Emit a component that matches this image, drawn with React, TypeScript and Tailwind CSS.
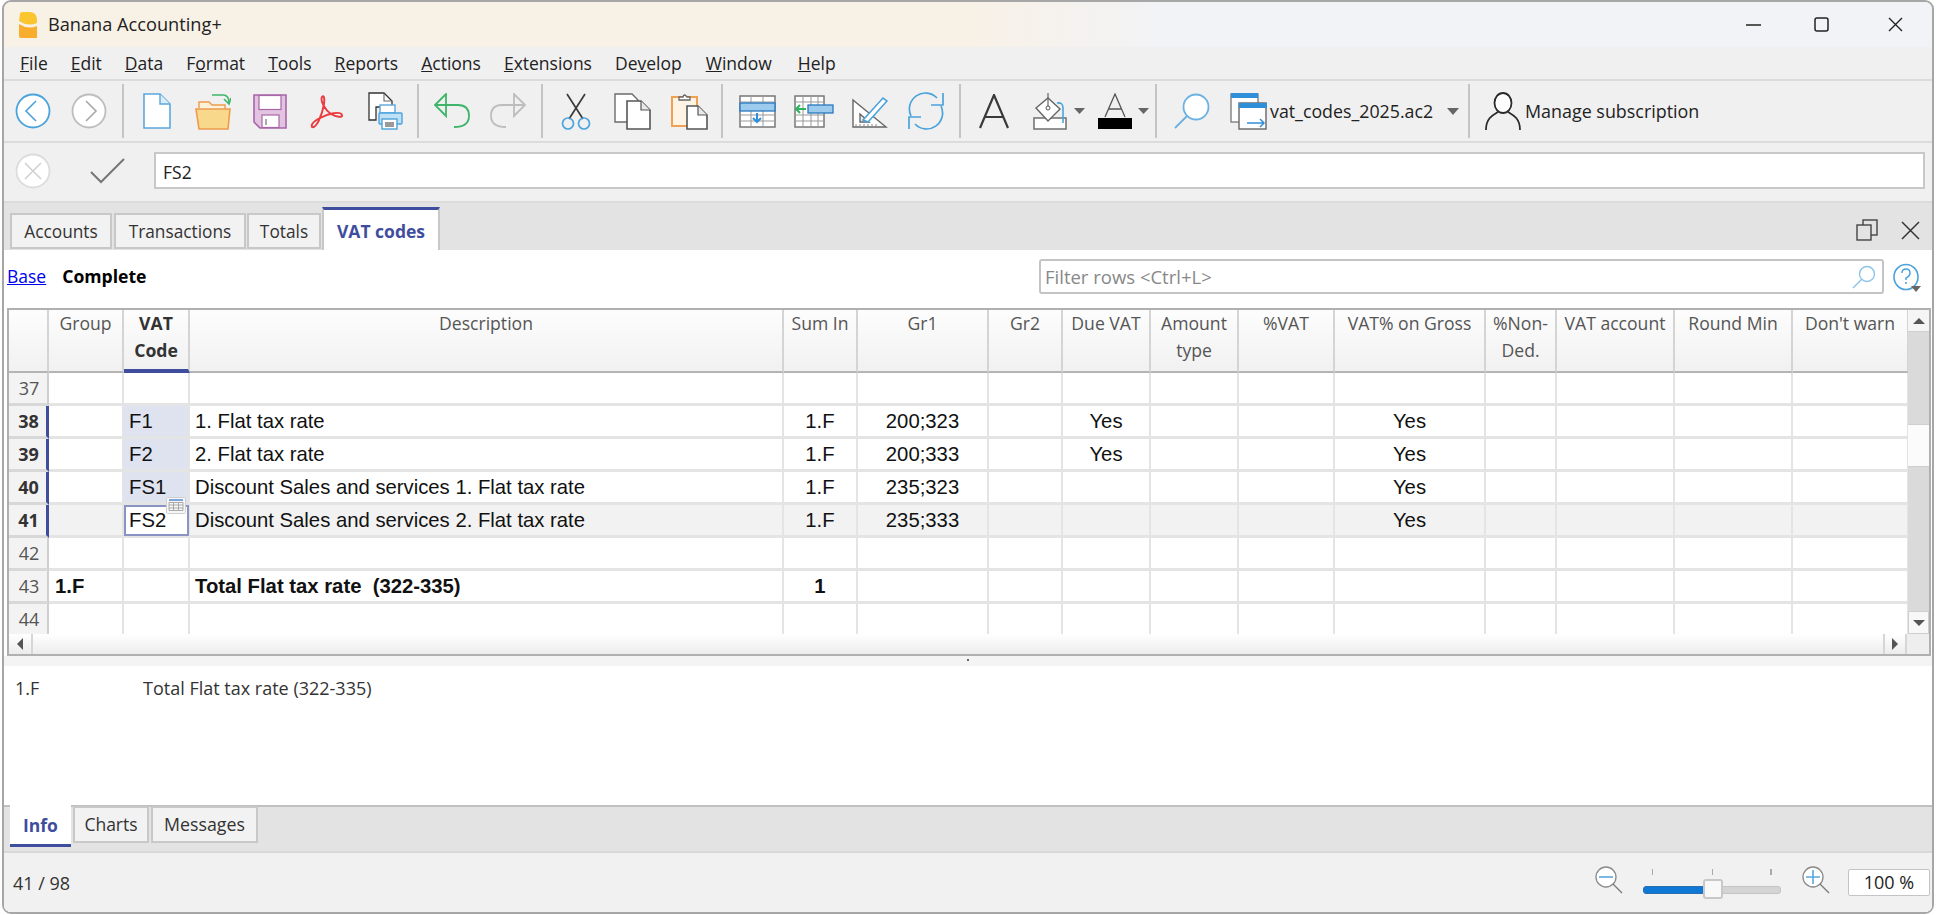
import React from "react";

const UI = "font-['Open_Sans','Noto_Sans',sans-serif]";

function Sep({ ml }: { ml: string }) {
  return <div className={`w-[2px] h-[54px] bg-[#c4c4c4] shrink-0 ${ml}`} />;
}

const Back = () => (
  <svg width="36" height="36" viewBox="0 0 36 36" className="ml-[11px] shrink-0">
    <circle cx="18" cy="18" r="16.5" fill="#fff" stroke="#4aa3dc" strokeWidth="1.8" />
    <path d="M21 8 L11 18 L21 28" fill="none" stroke="#4aa3dc" strokeWidth="1.6" />
  </svg>
);
const Fwd = () => (
  <svg width="36" height="36" viewBox="0 0 36 36" className="ml-[20px] shrink-0">
    <circle cx="18" cy="18" r="16.5" fill="#fff" stroke="#bdbdbd" strokeWidth="1.8" />
    <path d="M15 8 L25 18 L15 28" fill="none" stroke="#a8a8a8" strokeWidth="1.6" />
  </svg>
);
const NewDoc = () => (
  <svg width="28" height="36" viewBox="0 0 28 36" className="ml-[19px] shrink-0">
    <path d="M1 1h16l10 10v24H1z" fill="#fff" stroke="#5ba7dd" strokeWidth="1.6" />
    <path d="M17 1v10h10" fill="#d9ecf8" stroke="#5ba7dd" strokeWidth="1.4" />
  </svg>
);
const Folder = () => (
  <svg width="36" height="38" viewBox="0 0 36 38" className="ml-[24px] shrink-0">
    <path d="M17 3h11q6 0 6 8" fill="none" stroke="#3fb56a" strokeWidth="1.6" />
    <path d="M29 7l5 5 2-6" fill="none" stroke="#3fb56a" strokeWidth="1.6" />
    <path d="M4 16v-6h10l3 3h13v4" fill="#fdf2d8" stroke="#ee9a4d" strokeWidth="1.4" />
    <path d="M1 17h34l-2 20H4z" fill="#f8d98c" stroke="#ee9a4d" strokeWidth="1.6" />
  </svg>
);
const Save = () => (
  <svg width="34" height="35" viewBox="0 0 34 35" className="ml-[22px] shrink-0">
    <path d="M1 1h32v33H7l-6-6z" fill="#e2c4e0" stroke="#a865a8" strokeWidth="1.6" />
    <rect x="6" y="1.5" width="22" height="14" fill="#fff" stroke="#a865a8" strokeWidth="1.2" />
    <rect x="9" y="21" width="17" height="12.5" fill="#fff" stroke="#a865a8" strokeWidth="1.2" />
    <rect x="12" y="25" width="2" height="6" fill="#aaa" />
  </svg>
);
const Pdf = () => (
  <svg width="34" height="35" viewBox="0 0 34 35" className="ml-[23px] shrink-0">
    <path d="M2 33 C6 35 12 22 14 10 C15 2 13 1 12 3 C10 7 15 16 21 20 C26 23 33 24 32 21 C31 17 18 19 8 25 C3 28 1 31 2 33 Z" fill="none" stroke="#ec3b40" strokeWidth="1.9" />
  </svg>
);
const Print = () => (
  <svg width="35" height="38" viewBox="0 0 35 38" className="ml-[24px] shrink-0">
    <path d="M1 1h15l8 8v6H8v13H1z" fill="#fff" stroke="#333" strokeWidth="1.3" />
    <path d="M16 1v8h8" fill="none" stroke="#666" strokeWidth="1.1" />
    <rect x="12" y="13" width="15" height="8" fill="#fff" stroke="#5ba7dd" strokeWidth="1.4" />
    <rect x="11" y="21" width="23" height="11" rx="1" fill="#bfe0f5" stroke="#4aa3dc" strokeWidth="1.4" />
    <rect x="14" y="27" width="15" height="10" fill="#fff" stroke="#4aa3dc" strokeWidth="1.4" />
    <rect x="17" y="30" width="9" height="5" fill="#9a9a9a" />
  </svg>
);
const Undo = () => (
  <svg width="36" height="36" viewBox="0 0 36 36" className="ml-[15px] shrink-0">
    <path d="M1 12 L12 1 V23 Z" fill="none" stroke="#3fb56a" strokeWidth="1.8" />
    <path d="M1 12 H24 Q35 12 35 23 Q35 34 20 34" fill="none" stroke="#3fb56a" strokeWidth="1.8" />
  </svg>
);
const Redo = () => (
  <svg width="36" height="36" viewBox="0 0 36 36" className="ml-[20px] shrink-0">
    <path d="M35 12 L24 1 V23 Z" fill="none" stroke="#bdbdbd" strokeWidth="1.8" />
    <path d="M35 12 H12 Q1 12 1 23 Q1 34 16 34" fill="none" stroke="#bdbdbd" strokeWidth="1.8" />
  </svg>
);
const Cut = () => (
  <svg width="30" height="37" viewBox="0 0 30 37" className="ml-[18px] shrink-0">
    <path d="M6 1 L22 26 M24 1 L8 26" stroke="#3b3b3b" strokeWidth="1.7" fill="none" />
    <circle cx="7" cy="30.5" r="5.5" fill="none" stroke="#4aa3dc" strokeWidth="1.7" />
    <circle cx="23" cy="30.5" r="5.5" fill="none" stroke="#4aa3dc" strokeWidth="1.7" />
  </svg>
);
const Copy = () => (
  <svg width="37" height="37" viewBox="0 0 37 37" className="ml-[23px] shrink-0">
    <path d="M1 1h17l6 6v22H1z" fill="#fff" stroke="#6b6b6b" strokeWidth="1.4" />
    <path d="M13 8h14l9 9v19H13z" fill="#fff" stroke="#555" strokeWidth="1.6" />
    <path d="M27 8v9h9" fill="#e8e8e8" stroke="#555" strokeWidth="1.2" />
  </svg>
);
const Paste = () => (
  <svg width="37" height="37" viewBox="0 0 37 37" className="ml-[20px] shrink-0">
    <rect x="1" y="4" width="25" height="29" fill="#fdf4e6" stroke="#f0a24f" strokeWidth="2" />
    <path d="M8 7V4h4q1-4 4 0h3v3z" fill="#fff" stroke="#666" strokeWidth="1.3" />
    <path d="M16 13h11l9 9v14H16z" fill="#fff" stroke="#555" strokeWidth="1.6" />
    <path d="M27 13v9h9" fill="#e8e8e8" stroke="#555" strokeWidth="1.2" />
  </svg>
);
const InsRow = () => (
  <svg width="37" height="33" viewBox="0 0 37 33" className="ml-[16px] shrink-0">
    <rect x="1" y="1" width="35" height="31" fill="#fff" stroke="#777" strokeWidth="1.5" />
    <path d="M1 7h35M1 20h35M1 26h35M12 1v31M24 1v31" stroke="#999" strokeWidth="1" />
    <rect x="1" y="8" width="35" height="8" fill="#9ccbee" stroke="#2a78bf" strokeWidth="1.3" />
    <path d="M18 18v9M14 23l4 4 4-4" fill="none" stroke="#2f8fd8" strokeWidth="2" />
  </svg>
);
const InsCol = () => (
  <svg width="40" height="33" viewBox="0 0 40 33" className="ml-[18px] shrink-0">
    <rect x="1" y="1" width="29" height="31" fill="#fff" stroke="#777" strokeWidth="1.5" />
    <path d="M1 7h29M1 20h29M1 26h29M9 1v31M17 1v31M24 1v31" stroke="#999" strokeWidth="1" />
    <rect x="14" y="10" width="25" height="8" fill="#9ccbee" stroke="#2a78bf" strokeWidth="1.3" />
    <path d="M12 14H2M6 10l-4 4 4 4" fill="none" stroke="#2fb35f" strokeWidth="2" />
  </svg>
);
const Tool = () => (
  <svg width="36" height="36" viewBox="0 0 36 36" className="ml-[18px] shrink-0">
    <path d="M1 7 L34 34 H1 Z M8 21 L17 29 H8 Z" fill="#fff" fillRule="evenodd" stroke="#666" strokeWidth="1.4" />
    <path d="M4 34v-3M8 34v-3M12 34v-3M16 34v-3M20 34v-3M24 34v-3" stroke="#888" strokeWidth="1" />
    <path d="M11 27 L31 5 L35 8 L16 29 Z" fill="#fff" stroke="#4aa3dc" strokeWidth="1.6" />
  </svg>
);
const Refresh = () => (
  <svg width="36" height="38" viewBox="0 0 36 38" className="ml-[20px] shrink-0">
    <path d="M3 24 A16 16 0 0 1 29 6" fill="none" stroke="#4aa3dc" strokeWidth="1.7" />
    <path d="M33 14 A16 16 0 0 1 7 32" fill="none" stroke="#4aa3dc" strokeWidth="1.7" />
    <path d="M35 1v12H23M1 37V25h12" fill="none" stroke="#4aa3dc" strokeWidth="1.7" />
  </svg>
);
const BigA = () => (
  <svg width="30" height="35" viewBox="0 0 30 35" className="ml-[18px] shrink-0">
    <path d="M1 34 L15 1 L29 34 M6 23H24" fill="none" stroke="#3a3a3a" strokeWidth="2.2" />
  </svg>
);
const Fill = () => (
  <svg width="54" height="37" viewBox="0 0 54 37" className="ml-[24px] shrink-0">
    <rect x="1" y="25" width="32" height="11" fill="#fff" stroke="#777" strokeWidth="1.6" />
    <path d="M3 15 L15 5 L27 16 L15 28 Z" fill="#fff" stroke="#666" strokeWidth="1.4" />
    <path d="M15 0v14" stroke="#666" strokeWidth="1.2" />
    <circle cx="15" cy="15" r="2" fill="#fff" stroke="#555" />
    <path d="M24 10 Q30 9 30 15V30" fill="none" stroke="#4aa3dc" strokeWidth="1.6" />
    <path d="M41 15h11l-5.500 6z" fill="#666" />
  </svg>
);
const FontColor = () => (
  <svg width="52" height="37" viewBox="0 0 52 37" className="ml-[11px] shrink-0">
    <path d="M7 24 L17 1 L27 24 M11 16H23" fill="none" stroke="#555" strokeWidth="1.3" />
    <rect x="0" y="25" width="34" height="11" fill="#000" />
    <path d="M40 15h11l-5.500 6z" fill="#666" />
  </svg>
);
const Search = () => (
  <svg width="36" height="36" viewBox="0 0 36 36" className="ml-[17px] shrink-0">
    <circle cx="22" cy="14" r="12.500" fill="#fff" stroke="#6ab2e2" strokeWidth="1.8" />
    <path d="M13 23 L1 35" stroke="#6ab2e2" strokeWidth="1.8" />
  </svg>
);
const Docs = () => (
  <svg width="37" height="37" viewBox="0 0 37 37" className="ml-[20px] shrink-0">
    <rect x="1" y="1" width="27" height="28" fill="#fff" stroke="#777" strokeWidth="1.3" />
    <rect x="1" y="0" width="27" height="5" fill="#2f8fd8" />
    <rect x="9" y="10" width="27" height="26" fill="#fff" stroke="#666" strokeWidth="1.4" />
    <rect x="9" y="10" width="28" height="5" fill="#2f8fd8" />
    <path d="M17 30h17M30 26l4 4-4 4" fill="none" stroke="#2f8fd8" strokeWidth="1.5" />
  </svg>
);
const Person = () => (
  <svg width="36" height="38" viewBox="0 0 36 38" className="ml-[15px] shrink-0">
    <ellipse cx="18" cy="11" rx="8.500" ry="10" fill="#fff" stroke="#2b2b2b" strokeWidth="1.8" />
    <path d="M1 38 C1 26 8 23 13 20 M35 38 C35 26 28 23 23 20" fill="none" stroke="#2b2b2b" strokeWidth="1.8" />
  </svg>
);

function Tab({ label, cls }: { label: string; cls: string }) {
  return (
    <div className={`h-[36px] mt-[10px] bg-[#f2f2f2] border-2 border-[#c8c8c8] flex items-center justify-center pt-[2px] text-[17.3px] text-[#333] shrink-0 ${cls}`}>
      {label}
    </div>
  );
}

const GRID = "grid grid-cols-[40px_75px_66px_594px_74px_131px_74px_88px_88px_96px_151px_71px_118px_118px_116px]";

const heads: [string, string?][] = [
  [""],
  ["Group"],
  ["VAT Code", "sel"],
  ["Description"],
  ["Sum In"],
  ["Gr1"],
  ["Gr2"],
  ["Due VAT"],
  ["Amount type"],
  ["%VAT"],
  ["VAT% on Gross"],
  ["%Non-Ded."],
  ["VAT account"],
  ["Round Min"],
  ["Don't warn"],
];

type Row = { n: number; sel?: boolean; cur?: boolean; bold?: boolean; group?: string; code?: string; desc?: string; sum?: string; gr1?: string; due?: string; gross?: string };
const rows: Row[] = [
  { n: 37 },
  { n: 38, sel: true, code: "F1", desc: "1. Flat tax rate", sum: "1.F", gr1: "200;323", due: "Yes", gross: "Yes" },
  { n: 39, sel: true, code: "F2", desc: "2. Flat tax rate", sum: "1.F", gr1: "200;333", due: "Yes", gross: "Yes" },
  { n: 40, sel: true, code: "FS1", desc: "Discount Sales and services 1. Flat tax rate", sum: "1.F", gr1: "235;323", gross: "Yes" },
  { n: 41, sel: true, cur: true, code: "FS2", desc: "Discount Sales and services 2. Flat tax rate", sum: "1.F", gr1: "235;333", gross: "Yes" },
  { n: 42 },
  { n: 43, bold: true, group: "1.F", desc: "Total Flat tax rate  (322-335)", sum: "1" },
  { n: 44 },
];

const cellBase = "h-[33px] border-r-2 border-b-[3px] border-[#e4e4e4] flex items-center whitespace-pre";

function DataRow({ r }: { r: Row }) {
  const bg = r.cur ? "bg-[#f2f2f2]" : "bg-white";
  const w = r.bold ? "font-bold" : "";
  const c = `${cellBase} overflow-hidden ${bg} ${w}`;
  const codeBg = r.sel && !r.cur ? "bg-[#dfe2ef]" : bg;
  return (
    <div className={`${GRID} font-['Liberation_Sans',Arial,sans-serif] text-[20.3px] text-[#111]`}>
      <div className={`h-[33px] border-b-[3px] border-[#d8d8d8] bg-[#f3f3f3] flex items-center justify-center pl-[2px] ${UI} text-[18px] ${r.sel ? "border-r-[3px] border-r-[#3f4d9e] font-bold text-[#333]" : "border-r-2 border-r-[#cfcfcf] text-[#555]"}`}>
        {r.n}
      </div>
      <div className={`${c} pl-[6px]`}>{r.group}</div>
      <div className={`${cellBase} ${w} pl-[5px] relative ${codeBg}`}>
        {r.cur ? (
          <>
            <div className="absolute left-0 top-0 w-[65px] h-[31px] border-2 border-[#8a94c4] bg-white pl-[3px] flex items-center">{r.code}</div>
            <svg width="20" height="17" viewBox="0 0 20 17" className="absolute left-[42px] top-[-8px] z-10">
              <rect x="0.500" y="0.500" width="19" height="16" rx="1" fill="#f6f6f6" stroke="#cfcfcf" />
              <rect x="3" y="2" width="14" height="2" fill="#7da7dc" />
              <path d="M3 5.500h14v8H3zM3 8h14M3 11h14M7.500 5.500v8M12.500 5.500v8" fill="none" stroke="#9a9a9a" strokeWidth="0.8" />
            </svg>
          </>
        ) : (
          r.code
        )}
      </div>
      <div className={`${c} pl-[5px]`}>{r.desc}</div>
      <div className={`${c} justify-center`}>{r.sum}</div>
      <div className={`${c} justify-center`}>{r.gr1}</div>
      <div className={c} />
      <div className={`${c} justify-center`}>{r.due}</div>
      <div className={c} />
      <div className={c} />
      <div className={`${c} justify-center`}>{r.gross}</div>
      <div className={c} />
      <div className={c} />
      <div className={c} />
      <div className={c} />
    </div>
  );
}

export default function App() {
  return (
    <div className={`w-[1936px] h-[915px] bg-white overflow-hidden ${UI} text-[#222]`}>
      <div className="ml-[2px] w-[1932px] h-[914px] border-2 border-[#a6a6a6] rounded-[9px] overflow-hidden flex flex-col bg-[#f0f0f0]">
        {/* Title */}
        <div className="h-[45px] shrink-0 flex items-center bg-gradient-to-r from-[#f8f1e6] from-50% to-[#f2f3f6] to-60%">
          <svg width="20" height="28" viewBox="0 0 20 28" className="ml-[14px] shrink-0">
            <path d="M2 3 Q2 1 5 1 H12 Q18 1 19 8 V12 Q10 16 1 10 Z" fill="#fbc52f" />
            <path d="M1 13 Q10 19 19 15 V27 H3 Q1 27 1 25 Z" fill="#f8ae2c" />
          </svg>
          <span className="ml-[10px] text-[18.2px] text-[#222]">Banana Accounting+</span>
          <svg width="15" height="2" viewBox="0 0 15 2" className="ml-auto shrink-0"><path d="M0 1h15" stroke="#222" strokeWidth="1.5" /></svg>
          <svg width="15" height="15" viewBox="0 0 15 15" className="ml-[53px] shrink-0"><rect x="1" y="1" width="13" height="13" rx="2" fill="none" stroke="#222" strokeWidth="1.5" /></svg>
          <svg width="15" height="15" viewBox="0 0 15 15" className="ml-[59px] mr-[29px] shrink-0"><path d="M1 1l13 13M14 1L1 14" stroke="#222" strokeWidth="1.4" /></svg>
        </div>
        {/* Menu */}
        <div className="h-[34px] shrink-0 border-b-2 border-[#dcdcdc] flex items-center pt-[1px] text-[17.5px] text-[#222]">
          <span className="ml-[16px]"><u>F</u>ile</span>
          <span className="ml-[23px]"><u>E</u>dit</span>
          <span className="ml-[23px]"><u>D</u>ata</span>
          <span className="ml-[23px]">F<u>o</u>rmat</span>
          <span className="ml-[23px]"><u>T</u>ools</span>
          <span className="ml-[23px]"><u>R</u>eports</span>
          <span className="ml-[23px]"><u>A</u>ctions</span>
          <span className="ml-[23px]"><u>E</u>xtensions</span>
          <span className="ml-[23px]">De<u>v</u>elop</span>
          <span className="ml-[24px]"><u>W</u>indow</span>
          <span className="ml-[26px]"><u>H</u>elp</span>
        </div>
        {/* Toolbar */}
        <div className="h-[62px] shrink-0 border-b-2 border-[#dcdcdc] flex items-center">
          <Back />
          <Fwd />
          <Sep ml="ml-[15px]" />
          <NewDoc />
          <Folder />
          <Save />
          <Pdf />
          <Print />
          <Sep ml="ml-[14px]" />
          <Undo />
          <Redo />
          <Sep ml="ml-[15px]" />
          <Cut />
          <Copy />
          <Paste />
          <Sep ml="ml-[13px]" />
          <InsRow />
          <InsCol />
          <Tool />
          <Refresh />
          <Sep ml="ml-[15px]" />
          <BigA />
          <Fill />
          <FontColor />
          <Sep ml="ml-[5px]" />
          <Search />
          <Docs />
          <span className="ml-[3px] w-[163px] shrink-0 whitespace-nowrap text-[17.8px] text-[#222]">vat_codes_2025.ac2</span>
          <span className="shrink-0 ml-[14px] w-0 h-0 border-x-[6px] border-x-transparent border-t-[7px] border-t-[#666]" />
          <Sep ml="ml-[9px]" />
          <Person />
          <span className="ml-[4px] text-[17.9px] text-[#222] whitespace-nowrap">Manage subscription</span>
        </div>
        {/* Formula bar */}
        <div className="h-[60px] shrink-0 border-b-2 border-[#dcdcdc] flex items-center pb-[3px]">
          <svg width="36" height="36" viewBox="0 0 36 36" className="ml-[11px] shrink-0">
            <circle cx="18" cy="18" r="16.500" fill="#fff" stroke="#dcdcdc" strokeWidth="1.8" />
            <path d="M10 10l16 16M26 10L10 26" stroke="#d0d0d0" strokeWidth="1.6" />
          </svg>
          <svg width="35" height="26" viewBox="0 0 35 26" className="ml-[39px] shrink-0">
            <path d="M1 14 L11 24 L34 1" fill="none" stroke="#777" strokeWidth="2" />
          </svg>
          <div className="ml-[29px] w-[1771px] h-[37px] bg-white border-2 border-[#c8c8c8] flex items-center pl-[7px] pt-[3px] text-[17.5px] text-[#222]">FS2</div>
        </div>
        {/* Tabs */}
        <div className="h-[47px] shrink-0 bg-[#e3e3e3] flex items-start">
          <Tab label="Accounts" cls="ml-[6px] w-[102px]" />
          <Tab label="Transactions" cls="ml-[2px] w-[132px]" />
          <Tab label="Totals" cls="ml-[1px] w-[74px]" />
          <div className="ml-[1px] mt-[4px] w-[118px] h-[43px] bg-white border-t-[3px] border-[#3f4d9e] border-x-2 border-x-[#c8c8c8] flex items-center justify-center pt-[2px] text-[17.5px] font-bold text-[#3f4d9e] shrink-0">
            VAT codes
          </div>
          <svg width="24" height="22" viewBox="0 0 24 22" className="ml-auto mt-[16px] shrink-0">
            <rect x="8" y="1" width="14" height="15" fill="none" stroke="#444" strokeWidth="1.4" />
            <rect x="2" y="6" width="14" height="15" fill="#e3e3e3" stroke="#444" strokeWidth="1.4" />
          </svg>
          <svg width="19" height="19" viewBox="0 0 19 19" className="ml-[22px] mr-[12px] mt-[18px] shrink-0">
            <path d="M1 1l17 17M18 1L1 18" stroke="#333" strokeWidth="1.5" />
          </svg>
        </div>
        {/* White content */}
        <div className="flex-1 bg-white flex flex-col min-h-0">
          <div className="h-[58px] shrink-0 flex items-center pb-[5px]">
            <a className="ml-[3px] text-[17.5px] text-[#0000ee] underline">Base</a>
            <span className="ml-[16px] text-[17.6px] font-bold text-black">Complete</span>
            <div className="ml-auto w-[845px] h-[35px] border-2 border-[#c4c4c4] rounded-[3px] flex items-center pl-[4px] text-[18.5px] text-[#888]">
              Filter rows &lt;Ctrl+L&gt;
              <svg width="24" height="24" viewBox="0 0 24 24" className="ml-auto mr-[6px]">
                <circle cx="15" cy="9" r="7.500" fill="none" stroke="#8cc4e8" strokeWidth="1.4" />
                <path d="M9.500 14.500 L1 23" stroke="#8cc4e8" strokeWidth="1.4" />
              </svg>
            </div>
            <div className="relative ml-[9px] mr-[11px] w-[28px] h-[30px] shrink-0">
              <svg width="28" height="30" viewBox="0 0 28 30">
                <ellipse cx="13" cy="15" rx="12" ry="12.500" fill="#fff" stroke="#4aa3dc" strokeWidth="1.6" />
                <path d="M9 11 Q9 7 13 7 Q17 7 17 11 Q17 14 13 16 V18" fill="none" stroke="#4aa3dc" strokeWidth="1.5" />
                <circle cx="13" cy="21" r="1" fill="#4aa3dc" />
              </svg>
              <span className="absolute right-0 bottom-[0px] w-0 h-0 border-x-[5px] border-x-transparent border-t-[6px] border-t-[#666]" />
            </div>
          </div>
          {/* Table */}
          <div className="ml-[3px] mr-[1px] h-[348px] shrink-0 border-2 border-[#b0b0b0] flex flex-col overflow-hidden relative">
            <div className="flex flex-1 min-h-0">
              <div className="flex-1 min-w-0 overflow-hidden">
                <div className={`${GRID} h-[63px]`}>
                  {heads.map(([h, s], i) => (
                    <div
                      key={i}
                      className={`h-[63px] border-r-2 border-r-[#d4d4d4] bg-gradient-to-b from-[#fdfdfd] to-[#f1f1f1] text-center text-[17.6px] leading-[27px] whitespace-normal ${s ? "border-b-[4px] font-bold text-[#333] border-b-[#3f4d9e]" : "border-b-2 border-b-[#b4b4b4] text-[#555]"}`}
                    >
                      {h === "VAT Code" ? <>VAT<br />Code</> : h === "%Non-Ded." ? <>%Non-<br />Ded.</> : h === "Amount type" ? <>Amount<br />type</> : <span className="whitespace-nowrap">{h}</span>}
                    </div>
                  ))}
                </div>
                {rows.map((r) => (
                  <DataRow key={r.n} r={r} />
                ))}
              </div>
              <div className="w-[21px] shrink-0 flex flex-col bg-[#dadada]">
                <div className="h-[22px] bg-[#f5f5f5] border-b border-[#cfcfcf] flex items-center justify-center">
                  <span className="w-0 h-0 border-x-[6px] border-x-transparent border-b-[6px] border-b-[#555]" />
                </div>
                <div className="h-[92px]" />
                <div className="h-[43px] bg-[#fbfbfb] border-y border-[#cfcfcf]" />
                <div className="flex-1" />
                <div className="h-[23px] bg-[#f8f8f8] border border-[#cfcfcf] flex items-center justify-center">
                  <span className="w-0 h-0 border-x-[6px] border-x-transparent border-t-[6px] border-t-[#555]" />
                </div>
              </div>
            </div>
            <div className="h-[20px] shrink-0 flex bg-gradient-to-b from-[#ffffff] to-[#ececec]">
              <div className="w-[24px] border-r-2 border-[#d6d6d6] flex items-center justify-center">
                <span className="w-0 h-0 border-y-[6px] border-y-transparent border-r-[6px] border-r-[#555]" />
              </div>
              <div className="flex-1" />
              <div className="w-[24px] border-x-2 border-[#d6d6d6] flex items-center justify-center">
                <span className="w-0 h-0 border-y-[6px] border-y-transparent border-l-[6px] border-l-[#555]" />
              </div>
              <div className="w-[22px] bg-[#eeeeee]" />
            </div>
          </div>
          {/* Splitter */}
          <div className="h-[10px] shrink-0 bg-[#f4f4f4] flex justify-center">
            <span className="w-[2px] h-[2px] bg-[#666] mt-[3px]" />
          </div>
          {/* Info panel */}
          <div className="h-[139px] shrink-0 bg-white flex items-start pt-[9px] pl-[11px] text-[18px] text-[#333]">
            <span className="w-[128px]">1.F</span>
            <span>Total Flat tax rate (322-335)</span>
          </div>
          {/* Bottom tabs */}
          <div className="h-[48px] shrink-0 bg-[#e3e3e3] border-t-2 border-b-2 border-t-[#c0c0c0] border-b-[#d8d8d8] flex items-start">
            <div className="ml-[6px] -mt-[2px] w-[61px] h-[42px] bg-white border-b-[3px] border-[#3f4d9e] flex items-center justify-center pt-[2px] font-bold text-[17.5px] text-[#3f4d9e] shrink-0">Info</div>
            <div className="ml-[2px] w-[76px] h-[37px] -mt-[1px] bg-[#f2f2f2] border-2 border-[#c8c8c8] flex items-center justify-center text-[17.5px] text-[#333] shrink-0">Charts</div>
            <div className="ml-[2px] w-[107px] h-[37px] -mt-[1px] bg-[#f2f2f2] border-2 border-[#c8c8c8] flex items-center justify-center text-[17.8px] text-[#333] shrink-0">Messages</div>
          </div>
          {/* Status */}
          <div className="flex-1 bg-[#f1f1f1] flex items-center text-[18px] text-[#333]">
            <span className="ml-[9px] pt-[2px]">41 / 98</span>
            <svg width="28" height="28" viewBox="0 0 28 28" className="ml-auto mb-[6px] shrink-0">
              <circle cx="11" cy="11" r="10" fill="#fff" stroke="#8a8a8a" strokeWidth="1.3" />
              <path d="M4 11h14" stroke="#5ba7dd" strokeWidth="1.6" />
              <path d="M18 18l9 9" stroke="#777" strokeWidth="1.2" />
            </svg>
            <div className="relative ml-[20px] w-[138px] h-[28px] shrink-0 flex items-center">
              <span className="absolute left-[9px] top-0 w-[1px] h-[6px] bg-[#aaa]" />
              <span className="absolute left-[69px] top-0 w-[1px] h-[6px] bg-[#aaa]" />
              <span className="absolute left-[127px] top-0 w-[2px] h-[6px] bg-[#aaa]" />
              <div className="w-[62px] h-[8px] mt-[14px] rounded-l-[3px] bg-[#0f78d4] border border-[#2a6fb0]" />
              <div className="flex-1 h-[8px] mt-[14px] rounded-r-[3px] bg-[#d4d4d4] border border-[#c4c4c4]" />
              <div className="absolute left-[60px] top-[10px] w-[20px] h-[20px] rounded-[3px] bg-[#f8f8f8] border-2 border-[#c8c8c8]" />
            </div>
            <svg width="28" height="28" viewBox="0 0 28 28" className="ml-[21px] mb-[6px] shrink-0">
              <circle cx="11" cy="11" r="10" fill="#fff" stroke="#8a8a8a" strokeWidth="1.3" />
              <path d="M4 11h14M11 4v14" stroke="#5ba7dd" strokeWidth="1.6" />
              <path d="M18 18l9 9" stroke="#777" strokeWidth="1.2" />
            </svg>
            <div className="ml-[18px] mr-[2px] w-[82px] h-[27px] bg-white border border-[#c4c4c4] rounded-[2px] flex items-center justify-center text-[18px] text-[#222] shrink-0">100 %</div>
          </div>
        </div>
      </div>
    </div>
  );
}
